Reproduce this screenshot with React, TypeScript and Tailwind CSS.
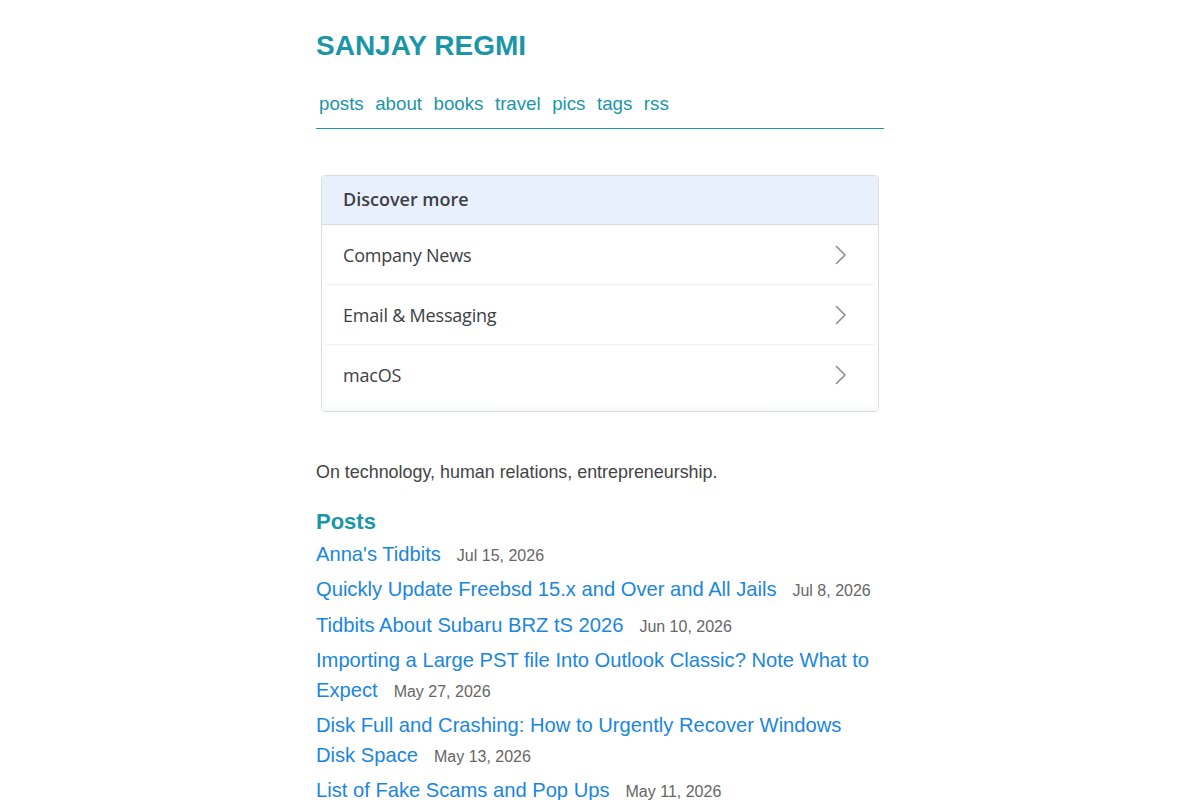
import React from "react";

const posts = [
  { title: "Anna's Tidbits", date: "Jul 15, 2026" },
  { title: "Quickly Update Freebsd 15.x and Over and All Jails", date: "Jul 8, 2026" },
  { title: "Tidbits About Subaru BRZ tS 2026", date: "Jun 10, 2026" },
  { title: "Importing a Large PST file Into Outlook Classic? Note What to Expect", date: "May 27, 2026" },
  { title: "Disk Full and Crashing: How to Urgently Recover Windows Disk Space", date: "May 13, 2026" },
  { title: "List of Fake Scams and Pop Ups", date: "May 11, 2026" },
  { title: "Windows 11 Tidbits", date: "May 2, 2026" },
];

const topics = ["Company News", "Email & Messaging", "macOS"];

function Chevron() {
  return (
    <svg width="12" height="20" viewBox="0 0 12 20" fill="none">
      <path d="M1.5 1.5 L10 10 L1.5 18.5" stroke="#8a8e93" strokeWidth="1.6" strokeLinecap="round" strokeLinejoin="round" />
    </svg>
  );
}

export default function App() {
  return (
    <div className="min-h-screen bg-white" style={{ fontFamily: '"Liberation Sans", Arial, sans-serif' }}>
      <div className="mx-auto w-[600px] px-4 pt-[29px]">
        <h1 className="text-[28px] leading-[34px] font-bold text-[#1a96a8] m-0">SANJAY REGMI</h1>
        <nav className="mt-[29px] pb-[12px] border-b border-[#1a96a8] flex gap-[11.5px] pl-[3px] text-[18.72px] leading-[24px] text-[#1a96a8]">
          <a>posts</a>
          <a>about</a>
          <a>books</a>
          <a>travel</a>
          <a>pics</a>
          <a>tags</a>
          <a>rss</a>
        </nav>

        <div
          className="mt-[46px] mx-[5px] border border-[#dadce0] rounded-[4px] overflow-hidden"
          style={{ fontFamily: '"Open Sans", Roboto, sans-serif' }}
        >
          <div className="h-[49px] bg-[#e8f0fe] border-b border-[#dadce0] flex items-center px-[21px] pb-[1px] text-[18px] font-semibold text-[#3c4043]">
            Discover more
          </div>
          {topics.map((t, i) => (
            <div key={t} className={i < topics.length - 1 ? "mx-[2px] border-b border-[#f1f3f4]" : "mx-[2px]"}>
              <div className="h-[59px] flex items-center justify-between pl-[19px] pr-[29px] pt-[1px]">
                <span className="text-[18px] text-[#3c4043] tracking-[-0.2px]">{t}</span>
                <Chevron />
              </div>
            </div>
          ))}
          <div className="h-[7px] bg-gradient-to-b from-white to-[#f6f7f8]" />
        </div>

        <p className="mt-[47px] text-[17.9px] leading-[27px] text-[#444]">
          On technology, human relations, entrepreneurship.
        </p>

        <h2 className="mt-[22px] text-[22px] leading-[28px] font-bold text-[#1a96a8]">Posts</h2>

        <ul className="mt-[3px]">
          {posts.map((p) => (
            <li key={p.title} className="mb-[5.3px] text-[20.17px] leading-[30px]">
              <a className="text-[#1a86e0]">{p.title}</a>
              <span className="ml-[16px] text-[16px] leading-none text-[#666]">{p.date}</span>
            </li>
          ))}
        </ul>
      </div>
    </div>
  );
}
